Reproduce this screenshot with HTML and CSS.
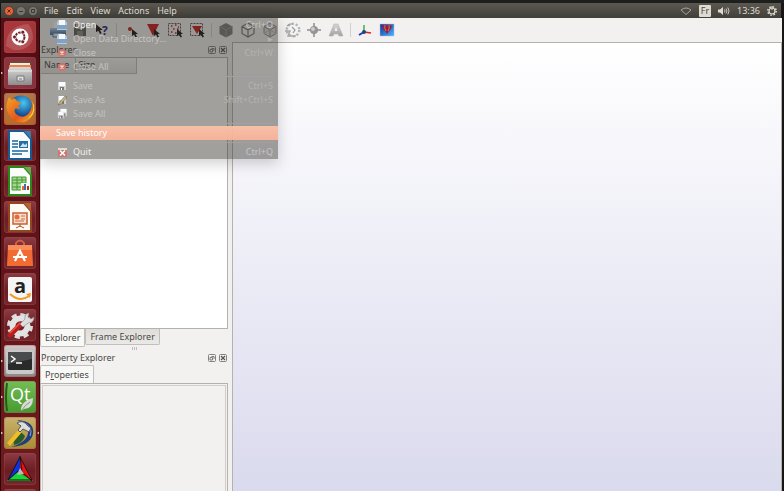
FILE: index.html
```html
<!DOCTYPE html>
<html lang="en">
<head>
<meta charset="utf-8">
<title>Explorer</title>
<link rel="stylesheet" href="styles.css">
</head>
<body>
<svg class="defs" aria-hidden="true">
  <defs>
    <linearGradient id="blueprint" x2="0" y2="1"><stop stop-color="#b8cfe8"/><stop offset=".5" stop-color="#6f9acb"/><stop offset="1" stop-color="#3c6597"/></linearGradient>
    <linearGradient id="sky" x2="1" y2="1"><stop stop-color="#0d2d9c"/><stop offset="1" stop-color="#4bb5ff"/></linearGradient>
    <linearGradient id="steel" x2="0" y2="1"><stop stop-color="#d8d8d8"/><stop offset="1" stop-color="#8d8d8d"/></linearGradient>
    <linearGradient id="letter" x2="0" y2="1"><stop stop-color="#d4d4d4"/><stop offset="1" stop-color="#a2a2a2"/></linearGradient>
    <radialGradient id="globe" cx=".6" cy=".3"><stop stop-color="#46c8f2"/><stop offset="1" stop-color="#174a92"/></radialGradient>
    <linearGradient id="fox" x2="1" y2="1"><stop stop-color="#f6a426"/><stop offset=".6" stop-color="#e4571b"/><stop offset="1" stop-color="#f8bd2c"/></linearGradient>
    <symbol id="cursor" viewBox="0 0 7 9"><path d="M0 0v7l2-1.500 1.500 3 1.500-.8-1.500-2.700H6z" fill="#161616"/></symbol>
    <symbol id="disk" viewBox="0 0 10 10"><path d="M1 1h8v8H1z" fill="#cfcfcf"/><path d="M2 1h6v4H2z" fill="#f8fbff"/><path d="M3 6h4v3H3z" fill="#777"/><path d="M4 7h1v2H4z" fill="#fff"/></symbol>
    <symbol id="closefile" viewBox="0 0 12 12"><circle cx="6" cy="6" r="4" fill="#d0746d"/><path d="M4.500 4.500l3 3M7.500 4.500l-3 3" stroke="#f4e4e0" stroke-width="1.400"/></symbol>
    <symbol id="folder" viewBox="0 0 12 12"><path d="M2 1h7l2 3v7H1V4z" fill="#bac8d7"/><path d="M3 1h6v5H3z" fill="#f5f7fa"/><path d="M1 6h10v4H1z" fill="#7fa2c8"/></symbol>
    <symbol id="float" viewBox="0 0 8 8"><rect x=".5" y=".5" width="7" height="7" rx="1" fill="none" stroke="#84827e"/><path d="M3.500 2.500h2.500v2.500M2 3.500h2.500V6H2z" fill="none" stroke="#64625e" stroke-width=".8"/></symbol>
    <symbol id="cross" viewBox="0 0 8 8"><rect x=".5" y=".5" width="7" height="7" rx="1" fill="none" stroke="#84827e"/><path d="M2 2l4 4M6 2L2 6" stroke="#55534f" stroke-width="1.200"/></symbol>
  </defs>
</svg>

<header class="panel">
  <div class="window-buttons">
    <button class="win close" aria-label="Close window"><svg viewBox="0 0 10 10"><circle cx="5" cy="5" r="4.500" fill="#e8623a" stroke="#3b2f28" stroke-width=".6"/><path d="M3.500 3.500l3 3M6.500 3.500l-3 3" stroke="#502818"/></svg></button>
    <button class="win" aria-label="Minimize"><svg viewBox="0 0 10 10"><circle cx="5" cy="5" r="4.500" fill="#77746b" stroke="#3c3b37" stroke-width=".6"/><path d="M3 5.500h4" stroke="#3c3b37"/></svg></button>
    <button class="win" aria-label="Maximize"><svg viewBox="0 0 10 10"><circle cx="5" cy="5" r="4.500" fill="#77746b" stroke="#3c3b37" stroke-width=".6"/><path d="M3.500 3.500h3v3h-3z" fill="none" stroke="#3c3b37"/></svg></button>
  </div>
  <nav class="menubar">
    <button>File</button><button>Edit</button><button>View</button><button>Actions</button><button>Help</button>
  </nav>
  <div class="indicators">
    <svg class="wifi" viewBox="0 0 12 8"><path d="M1 3Q6-1 11 3L6 7.500z" fill="none" stroke="#a9a59c"/></svg>
    <span class="lang">Fr</span>
    <svg class="sound" viewBox="0 0 12 10"><path d="M0 3.500h2L5 1v8L2 6.500H0z" fill="#dfdbd2"/><path d="M6.500 3.500q1 1.500 0 3M8 2.500q2 2.500 0 5M9.800 1.500q2.500 3.500 0 7" fill="none" stroke="#c9c5bc"/></svg>
    <time>13:36</time>
    <svg class="cog" viewBox="0 0 10 10"><circle cx="5" cy="5" r="4.200" fill="none" stroke="#dfdbd2" stroke-width="1.500" stroke-dasharray="1.600 1.700"/><circle cx="5" cy="5" r="3" fill="none" stroke="#dfdbd2" stroke-width="1.200"/><path d="M5 0v4" stroke="#dfdbd2"/></svg>
  </div>
</header>

<div class="desktop">
  <nav class="launcher">
    <button class="tile dash" aria-label="Dash"><svg viewBox="0 0 32 32"><path d="M2 25Q2 5 24 3Q29 7 29 18Q25 30 9 29z" fill="#fff" opacity=".15"/><circle cx="16" cy="16" r="8.500" fill="#fff"/><circle cx="16" cy="16" r="4.500" fill="none" stroke="#6f2226" stroke-width="2" stroke-dasharray="8.400 1"/><g fill="#6f2226" stroke="#fff" stroke-width=".8"><circle cx="10.500" cy="16" r="2"/><circle cx="18.800" cy="11.200" r="2"/><circle cx="18.800" cy="20.800" r="2"/></g></svg></button>
    <button class="tile files running" aria-label="Files"><svg viewBox="0 0 32 32"><path d="M5 4h22v12H5z" fill="#79452e"/><path d="M6 6h20v2H6z" fill="#eee"/><path d="M5 8h22v5H5z" fill="#f07e42"/><path d="M4 13l2-3h20l2 3v14q0 1-1 1H5q-1 0-1-1z" fill="url(#steel)"/><path d="M4 14h24" stroke="#eee"/><path d="M13 19h7v5h-7z" fill="#ddd" stroke="#777"/><path d="M15 22h3" stroke="#777"/></svg></button>
    <button class="tile fire running" aria-label="Firefox"><svg viewBox="0 0 32 32"><circle cx="17" cy="15" r="12.500" fill="url(#globe)"/><path d="M5 4q-5 10 0 18 6 9 16 7Q31 25 30 12l-3-5q2 8-2 13-6 7-13 1-3-4 0-6 2 2 4 0l-2-2 3-3-4-2Q10 3 8 7z" fill="url(#fox)"/><path d="M27 7q6 11-4 19 9-4 7-14z" fill="#ffd743"/></svg></button>
    <button class="tile" aria-label="Writer"><svg viewBox="0 0 32 32"><path d="M5 2h15l7 8v20H5z" fill="#f9fbfc" stroke="#185b91" stroke-width="2"/><path d="M20 2h7v8z" fill="#3d7da9"/><path d="M8 12h6M8 15h6M8 18h6M8 22h16M8 25h10" stroke="#1c689b" stroke-width="1.500"/><path d="M15 12h9v7h-9z" fill="#276f9f"/><path d="M16 18l3-4 2 2 2-2v4z" fill="#cde2ea"/></svg></button>
    <button class="tile" aria-label="Calc"><svg viewBox="0 0 32 32"><path d="M5 2h15l7 8v20H5z" fill="#fbfdfa" stroke="#2a861b" stroke-width="2"/><path d="M20 2h7v8z" fill="#5fae48"/><path d="M8 12h14v13H8z" fill="#a6d68e"/><path d="M8 12h14v13H8zM8 15h14M8 18h14M8 22h14M13 12v13M18 12v13" fill="none" stroke="#409b30"/><path d="M17 18h8v8h-8z" fill="#f9f9f9"/><path d="M18 21h2v4h-2z" fill="#f06a25"/><path d="M20 19h2v6h-2z" fill="#2d79b5"/><path d="M23 21h2v4h-2z" fill="#b42f27"/></svg></button>
    <button class="tile" aria-label="Impress"><svg viewBox="0 0 32 32"><path d="M5 2h15l7 8v20H5z" fill="#fffaf4" stroke="#93461d" stroke-width="2"/><path d="M20 2h7v8z" fill="#b96333"/><path d="M9 12h14v11H9z" fill="#f8ded0" stroke="#c76033" stroke-width="1.500"/><circle cx="13" cy="16" r="2.500" fill="#e66b36"/><path d="M17 15h4M17 18h4M11 20h9" stroke="#cf6a40"/><path d="M16 23v3M12 27l4-2 4 2" fill="none" stroke="#a9572e"/></svg></button>
    <button class="tile" aria-label="Software"><svg viewBox="0 0 32 32"><path d="M12 10V6q4-5 8 0v4" fill="none" stroke="#cc6046" stroke-width="2"/><path d="M4 8h24l1 21H3z" fill="#f26b32"/><path d="M4 8h24v5H4z" fill="#f98c58"/><path d="M11 24l5-10 5 10M9 20h14" fill="none" stroke="#fff" stroke-width="2.200"/></svg></button>
    <button class="tile" aria-label="Amazon"><svg viewBox="0 0 32 32"><rect x="4" y="4" width="24" height="25" rx="2" fill="#f5f5f5"/><text class="amazon" x="16" y="20" text-anchor="middle">a</text><path d="M6 21q10 9 19 2" fill="none" stroke="#f39a22" stroke-width="2"/><path d="M22 21l5-1-1 5z" fill="#f39a22"/></svg></button>
    <button class="tile" aria-label="System settings"><svg viewBox="0 0 32 32"><circle cx="16" cy="17" r="11" fill="none" stroke="#ddd" stroke-width="4" stroke-dasharray="5 3.640"/><circle cx="16" cy="17" r="7.500" fill="none" stroke="#e3e3e3" stroke-width="6"/><path d="M6 26L17 15" stroke="#b91e1b" stroke-width="5" stroke-linecap="round"/><path d="M6 24L16 14" stroke="#ed5148" stroke-width="1.500"/><path d="M16 15l5-5q-1-5 4-6l-1 4 3 2 3-2q0 6-6 6l-5 4z" fill="#ddd" stroke="#888" stroke-width=".6"/></svg></button>
    <button class="tile term running" aria-label="Terminal"><svg viewBox="0 0 32 32"><rect x="2" y="5" width="28" height="24" rx="2" fill="#c8c8c8"/><rect x="4" y="7" width="24" height="18" rx="1" fill="#292b2b"/><path d="M4 7h24v7L4 19z" fill="#484c4c"/><path d="M7 11l4 3-4 3M12 18h6" fill="none" stroke="#fff" stroke-width="1.500"/></svg></button>
    <button class="tile qt running" aria-label="Qt Creator"><svg viewBox="0 0 32 32"><path d="M3 2q-2 14 0 28" fill="none" stroke="#255e1b" stroke-width="2"/><text class="qt-name" x="6" y="20">Qt</text><path d="M17 30q-1-9 12-13 0 11-9 11z" fill="#d7dbd4"/><path d="M17 30q5-7 9-9" fill="none" stroke="#8a9685"/></svg></button>
    <button class="tile app running active" aria-label="Application"><svg viewBox="0 0 32 32"><path d="M13 3Q31 4 29 17 26 29 7 30q16-5 17-14Q25 8 13 3z" fill="#203e82"/><path d="M19 5q11 5 7 14" fill="none" stroke="#8ca3d6"/><path d="M10 28q-2-12 7-13l4 4q-2 7-11 9z" fill="#285b29"/><path d="M3 26L15 12l3 3L6 29z" fill="#f0bd28"/><path d="M14 13l3-4-4-3q6-4 11 3l3 2-2 4-6-3-3 3z" fill="#ddd" stroke="#555"/></svg></button>
    <button class="tile" aria-label="CMake"><svg viewBox="0 0 32 32"><path d="M16 3L3 28l13-8z" fill="#1431d8"/><path d="M16 3l13 25-13-9z" fill="#e61313"/><path d="M3 28l11-9 15 9z" fill="#15da31"/><path d="M16 4L4 27h24zM16 3l2 16 10 9M14 18L4 27" fill="none" stroke="#191111"/><path d="M16 15l4 6-7 1z" fill="#bbb"/></svg></button>
    <button class="tile" aria-label="More"></button>
  </nav>

  <main class="window">
    <div class="toolbar">
      <button aria-label="Print"><svg viewBox="0 0 18 18"><path d="M5 1h8v8H5z" fill="#fff"/><path d="M1 7h16v7H1z" fill="url(#blueprint)"/><path d="M4 12h10v4H4z" fill="#e4eefa" stroke="#4c79ad"/></svg></button>
      <button aria-label="Save"><svg viewBox="0 0 18 18"><path d="M3 3h12v12H3z" fill="#5e6060"/><path d="M5 3h8v5H5z" fill="#b9bab9"/><path d="M6 10h6v5H6z" fill="#8a8b8a"/></svg></button>
      <button aria-label="What's this"><svg viewBox="0 0 18 18"><use href="#cursor" x="3" y="3" width="8" height="11"/><text class="question" x="9" y="14">?</text></svg></button>
      <i class="rule"></i>
      <button aria-label="Pick point"><svg viewBox="0 0 18 18"><circle cx="8" cy="8" r="2" fill="#c81818"/><use href="#cursor" x="10" y="8" width="7" height="9"/></svg></button>
      <button aria-label="Pick cell"><svg viewBox="0 0 18 18"><path d="M3 3h12L9 15z" fill="#c91b1b"/><use href="#cursor" x="10" y="8" width="7" height="9"/></svg></button>
      <button aria-label="Pick points in area"><svg viewBox="0 0 18 18"><path d="M2.500 2.500h12v12h-12z" fill="none" stroke="#555" stroke-dasharray="2 1"/><path d="M5 5h1.500M9 4h1.500M12 6h1M7 8h1.500M11 8h1.500M5 11h1.500M9 12h1.500" stroke="#c81818" stroke-width="1.500"/><use href="#cursor" x="11" y="8" width="7" height="9"/></svg></button>
      <button aria-label="Pick cells in area"><svg viewBox="0 0 18 18"><path d="M2.500 2.500h12v12h-12z" fill="none" stroke="#555" stroke-dasharray="2 1"/><path d="M4 5h10l-5 8z" fill="#c81818"/><use href="#cursor" x="11" y="8" width="7" height="9"/></svg></button>
      <i class="rule"></i>
      <button aria-label="Surface"><svg viewBox="0 0 18 18"><path d="M9 2l6.500 3.500v7.500L9 16.500 2.500 13V5.500z" fill="#7c7c7c"/><path d="M2.500 5.500L9 9l6.500-3.500M9 9v7" fill="none" stroke="#9a9a9a"/></svg></button>
      <button aria-label="Surface with edges"><svg viewBox="0 0 18 18"><path d="M9 2l6 3.500v7L9 16l-6-3.500v-7zM3 5.500L9 9l6-3.500M9 9v7" fill="none" stroke="#777" stroke-width="1.200"/></svg></button>
      <button aria-label="Wireframe"><svg viewBox="0 0 18 18"><path d="M9 2l6 3.500v7L9 16l-6-3.500v-7z" fill="#ddd" stroke="#8c8c8c"/><path d="M3 5.500L9 9l6-3.500M9 9v7" fill="none" stroke="#8c8c8c"/><path d="M3 12.500L9 9l6 3.500M9 2v7" fill="none" stroke="#bbb"/></svg></button>
      <button aria-label="Texture"><svg viewBox="0 0 18 18"><circle cx="10" cy="9" r="6" fill="#eee" stroke="#b5b5b5" stroke-width="3" stroke-dasharray="2 1.770"/><circle cx="10" cy="9" r="5" fill="#f3f3f3"/><path d="M4 5l3-2h3M9 6l3 3-2 3" fill="none" stroke="#999" stroke-width="1.200"/><path d="M2 10h5l-2 5h8" fill="none" stroke="#aaa" stroke-width="1.500"/></svg></button>
      <button aria-label="Center"><svg viewBox="0 0 18 18"><path d="M9 2v14M2 9h14" stroke="#8c8c8c" stroke-width="1.500"/><circle cx="9" cy="9" r="4" fill="#959595"/><circle cx="8" cy="8" r="2" fill="#ccc"/></svg></button>
      <button aria-label="Annotate"><svg viewBox="0 0 18 18"><path d="M7 3h4l5 12h-4l-1-2H7l-1 2H2z" fill="url(#letter)" stroke="#b5b5b5" stroke-width=".6"/><path d="M9 6l1.500 4h-3z" fill="#f2f1f0"/></svg></button>
      <i class="rule"></i>
      <button aria-label="Axes"><svg viewBox="0 0 18 18"><path d="M8 11V4" stroke="#3cae49" stroke-width="1.500"/><path d="M8 11l7 1" stroke="#db2525" stroke-width="1.500"/><path d="M8 11l-5 3" stroke="#2035bd" stroke-width="2"/><circle cx="8" cy="11" r="2" fill="#1c477a"/></svg></button>
      <button aria-label="Screenshot"><svg viewBox="0 0 18 18"><path d="M2 3h14v12H2z" fill="url(#sky)" stroke="#a9c3dd" stroke-width=".5"/><path d="M5 4h8q2 3-2 6l-2 3-2-3Q3 7 5 4z" fill="#a31843"/><path d="M7 4q-1 3 1 6M11 4q1 3-1 6" stroke="#b08a48" fill="none"/></svg></button>
    </div>

    <div class="workspace">
      <aside class="docks">
        <section class="dock explorer">
          <h2 class="dock-title">Explorer <span><button aria-label="Float"><svg viewBox="0 0 8 8"><use href="#float"/></svg></button><button aria-label="Close"><svg viewBox="0 0 8 8"><use href="#cross"/></svg></button></span></h2>
          <div class="tree"><table><thead><tr><th class="name-col">Name</th><th class="size-col">Size</th></tr></thead></table></div>
          <div class="bottom-tabs"><button class="tab current">Explorer</button><button class="tab">Frame Explorer</button></div>
        </section>
        <div class="grip"></div>
        <section class="dock properties">
          <h2 class="dock-title">Property Explorer <span><button aria-label="Float"><svg viewBox="0 0 8 8"><use href="#float"/></svg></button><button aria-label="Close"><svg viewBox="0 0 8 8"><use href="#cross"/></svg></button></span></h2>
          <div class="top-tabs"><button class="tab current">P<u>r</u>operties</button></div>
          <div class="tab-page"><div class="inner"></div></div>
        </section>
      </aside>
      <section class="viewport" aria-label="3D view"></section>
    </div>

    <div class="menu" role="menu">
      <button role="menuitem"><svg viewBox="0 0 12 12"><use href="#folder"/></svg><span>Open</span><kbd>Ctrl+O</kbd></button>
      <button role="menuitem" class="dim"><svg viewBox="0 0 12 12"><use href="#folder"/></svg><span>Open Data Directory...</span><kbd>▸</kbd></button>
      <button role="menuitem" class="dim"><svg viewBox="0 0 12 12"><use href="#closefile"/></svg><span>Close</span><kbd>Ctrl+W</kbd></button>
      <button role="menuitem" class="dim"><svg viewBox="0 0 12 12"><use href="#closefile"/></svg><span>Close All</span></button>
      <hr>
      <button role="menuitem" class="dim"><svg viewBox="0 0 12 12"><use href="#disk" x="1" y="1" width="10" height="10"/></svg><span>Save</span><kbd>Ctrl+S</kbd></button>
      <button role="menuitem" class="dim"><svg viewBox="0 0 12 12"><use href="#disk" x="1" y="1" width="10" height="10"/><path d="M3 9l6-7 2 1-6 7-3 1z" fill="#c7b376" stroke="#6c675a" stroke-width=".6"/></svg><span>Save As</span><kbd>Shift+Ctrl+S</kbd></button>
      <button role="menuitem" class="dim"><svg viewBox="0 0 12 12"><use href="#disk" x="3" y="0" width="9" height="9"/><use href="#disk" x="1" y="3" width="8" height="8"/></svg><span>Save All</span></button>
      <hr>
      <button role="menuitem" class="selected"><span>Save history</span></button>
      <hr>
      <button role="menuitem"><svg viewBox="0 0 12 12"><rect x="2" y="2" width="9" height="9" rx="1" fill="#d07570"/><path d="M2 2h9v2H2z" fill="#dedbd9"/><path d="M4 4.500l5 5M9 4.500l-5 5" stroke="#fff" stroke-width="1.500"/></svg><span>Quit</span><kbd>Ctrl+Q</kbd></button>
    </div>
  </main>
</div>
</body>
</html>
```

FILE: styles.css
```css
* { box-sizing: border-box; }
html, body { height: 100%; }
body {
  margin: 0;
  display: flex;
  flex-direction: column;
  overflow: hidden;
  background: #171515;
  border-top: 3px solid #1e1e1e;
  font: 9px/14px "Noto Sans", "Open Sans", sans-serif;
  color: #4a4845;
}
button { font: inherit; color: inherit; border: 0; padding: 0; margin: 0; background: none; }
svg { display: block; }
.defs { position: absolute; width: 0; height: 0; }

.panel {
  flex: none;
  height: 15px;
  display: flex;
  align-items: center;
  margin: 0 3px 0 1px;
  background: linear-gradient(#5b584f, #403f3a);
  color: #dfdbd2;
}
.window-buttons { display: flex; gap: 2px; padding-left: 3px; width: 43px; }
.win svg { width: 10px; height: 10px; }
.menubar { display: flex; gap: 8px; }
.indicators { margin-left: auto; display: flex; align-items: center; gap: 7px; padding-right: 4px; }
.wifi { width: 12px; height: 8px; }
.lang { background: #dfdbd2; color: #4c4a45; width: 12px; line-height: 12px; text-align: center; border-radius: 1px; }
.sound { width: 12px; height: 10px; }
.cog { width: 10px; height: 10px; }

.desktop { flex: 1; min-height: 0; display: flex; margin-right: 2px; }
.launcher {
  flex: none;
  width: 40px;
  display: flex;
  flex-direction: column;
  align-items: center;
  gap: 4px;
  padding-top: 3px;
  overflow: hidden;
  background: linear-gradient(#560d13, #701a1d);
  border-left: 1px solid #240508;
  border-right: 1px solid #3d080c;
}
.tile {
  flex: none;
  position: relative;
  width: 32px;
  height: 32px;
  border-radius: 3px;
  background: linear-gradient(#8c3b42, #6b1d23 55%, #74282d);
  box-shadow: inset 0 0 0 1px #9b555955;
}
.tile svg { width: 32px; height: 32px; overflow: visible; }
.dash { background: #a7373b; }
.files { background: #8b3340; }
.fire { background: linear-gradient(#b47b4b, #b96929); }
.term { background: linear-gradient(#d1c7c7, #8e8584); }
.qt { background: linear-gradient(#74bd55, #469a30); }
.app { background: linear-gradient(#c8b26d, #a98c35); }
.running::before, .active::after {
  content: "";
  position: absolute;
  top: 14px;
  left: -4px;
  border: 2px solid transparent;
  border-left: 3px solid #dedbd7;
}
.active::after { left: auto; right: -4px; border-left: 0; border-right: 3px solid #dedbd7; }
.amazon { font: bold 20px "Open Sans", sans-serif; fill: #222; }
.qt-name { font: 18px "Open Sans", sans-serif; fill: #fff; }
.question { font: bold 12px "Open Sans", sans-serif; fill: #20208b; }

.window { position: relative; flex: 1; min-width: 0; display: flex; flex-direction: column; background: #f2f1f0; }
.toolbar { flex: none; height: 24px; display: flex; align-items: center; padding-left: 7px; }
.toolbar button { flex: none; width: 22px; display: flex; justify-content: center; }
.toolbar svg { width: 18px; height: 18px; }
.rule { width: 1px; height: 14px; margin: 0 3px; background: #d2d0cd; }

.workspace { flex: 1; min-height: 0; display: flex; }
.docks { flex: none; width: 192px; padding-right: 4px; display: flex; flex-direction: column; }
.viewport {
  flex: 1;
  border: 1px solid #b5b2ae;
  border-bottom: 0;
  background: linear-gradient(#fff, #dadaee);
}
.dock { display: flex; flex-direction: column; }
.explorer { flex: none; }
.properties { flex: 1; min-height: 0; }
.dock-title { display: flex; justify-content: space-between; align-items: center; height: 15px; margin: 0; padding: 0 1px; font-size: 9px; font-weight: normal; }
.dock-title span { display: flex; gap: 3px; }
.dock-title svg { width: 8px; height: 8px; }
.tree { height: 272px; border: 1px solid #b5b2ae; border-left-color: #dedbd8; background: #fff; }
.tree table { border-collapse: collapse; }
.tree th { height: 15px; padding: 0 3px; text-align: left; font-weight: normal; background: linear-gradient(#f8f7f6, #e8e6e4); border: solid #c5c2be; border-width: 0 1px 1px 0; }
.name-col { width: 34px; }
.size-col { width: 61px; }
.bottom-tabs, .top-tabs { display: flex; align-items: flex-start; }
.tab { height: 16px; padding: 0 4px; border: 1px solid #c2bfbb; background: linear-gradient(#dfddda, #ebe9e7); }
.tab.current { height: 18px; background: #f8f8f7; }
.bottom-tabs .tab { border-top: 0; border-radius: 0 0 2px 2px; }
.top-tabs .tab { border-bottom: 0; border-radius: 2px 2px 0 0; }
.grip { flex: none; width: 5px; height: 3px; margin: 0 auto; background: repeating-linear-gradient(90deg, #c1beba 0 1px, transparent 1px 2px); }
.tab-page { flex: 1; border: 1px solid #b5b2ae; border-bottom: 0; padding: 1px 1px 0; }
.inner { height: 100%; border: 1px solid #d0cdca; border-bottom: 0; }

.menu {
  position: absolute;
  top: 0;
  left: 0;
  width: 238px;
  background: rgba(46, 44, 38, .45);
  box-shadow: 0 4px 14px rgba(0, 0, 0, .2);
  color: #f0efed;
}
.menu button { display: flex; align-items: center; width: 100%; height: 14px; padding: 0 5px 0 16px; text-align: left; }
.menu svg { width: 12px; height: 12px; margin-right: 5px; }
.menu kbd { margin-left: auto; font: inherit; color: #c5c4c2; }
.menu .dim { color: #c5c4c2; }
.menu .dim kbd { color: #b4b3b0; }
.menu .selected { background: linear-gradient(rgba(255, 194, 168, .92), rgba(252, 180, 154, .92)); color: #fff; }
.menu hr { height: 1px; margin: 2px 4px; border: 0; background: #a3a19e; }
```
